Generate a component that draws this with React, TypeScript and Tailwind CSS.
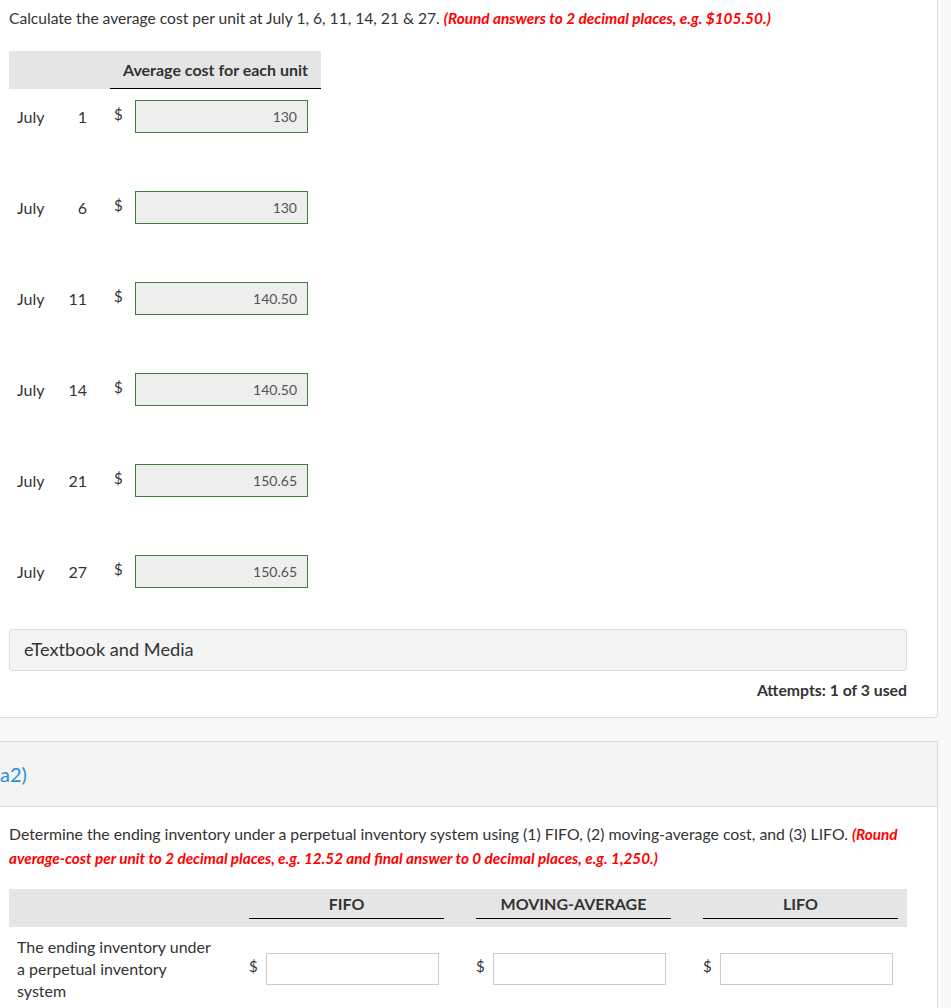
const rows = [
  { day: '1', value: '130' },
  { day: '6', value: '130' },
  { day: '11', value: '140.50' },
  { day: '14', value: '140.50' },
  { day: '21', value: '150.65' },
  { day: '27', value: '150.65' },
]

const methods = [
  { name: 'FIFO', w: 'w-[227px]' },
  { name: 'MOVING-AVERAGE', w: 'w-[227px]' },
  { name: 'LIFO', w: 'w-[213px]' },
]

function Dollar() {
  return <span className="w-[17px] shrink-0 pb-[5px] text-[15px] text-[#333]">$</span>
}

export default function App() {
  return (
    <div className="flex min-h-screen bg-[#f8f8f8] font-['Lato',_'Liberation_Sans',_sans-serif] text-[#333]">
      <div className="w-[938px] shrink-0">
        {/* part a1 */}
        <div className="rounded-br-[4px] border-r border-b border-[#dcdcdc] bg-white pb-[16px]">
          <p className="pl-[9px] pt-[8px] text-[15.6px] leading-[20px]">
            Calculate the average cost per unit at July 1, 6, 11, 14, 21 &amp; 27.{' '}
            <span className="text-[15.4px] font-bold italic text-[#ff0000]">
              (Round answers to 2 decimal places, e.g. $105.50.)
            </span>
          </p>

          <div className="ml-[9px] mt-[23px] w-[312px]">
            <div className="flex h-[38px] bg-[#e5e5e5]">
              <div className="w-[101px] shrink-0" />
              <div className="flex flex-1 items-center justify-center border-b border-black text-[16px] font-bold">
                Average cost for each unit
              </div>
            </div>
            {rows.map((r, i) => (
              <div
                key={r.day}
                className={`flex h-[33px] items-center ${i === 0 ? 'mt-[11px]' : 'mt-[58px]'}`}
              >
                <div className="flex w-[101px] shrink-0 justify-between pl-[8px] pr-[23px] text-[16px]">
                  <span>July</span>
                  <span>{r.day}</span>
                </div>
                <div className="flex w-[25px] shrink-0 justify-center">
                  <Dollar />
                </div>
                <div className="flex h-[33px] w-[173px] shrink-0 items-center justify-end border border-[#3f7b3f] bg-[#eeeeee] pr-[10px] text-[14px] text-[#555]">
                  {r.value}
                </div>
              </div>
            ))}
          </div>

          <div className="ml-[9px] mt-[41px] flex h-[42px] w-[898px] items-center rounded-[3px] border border-[#dddddd] bg-[#f4f4f4] pl-[14px] text-[18.2px]">
            eTextbook and Media
          </div>
          <div className="mt-[8px] w-[907px] text-right text-[15.8px] font-bold leading-[22px]">
            Attempts: 1 of 3 used
          </div>
        </div>

        {/* part a2 */}
        <div className="mt-[23px] border-t border-r border-[#dcdcdc] bg-white">
          <div className="flex h-[65px] items-center border-b border-[#dcdcdc] bg-[#f4f4f4] text-[20px] text-[#2a8ee0]">
            a2)
          </div>
          <p className="pl-[9px] pr-[20px] pt-[15px] text-[15.8px] leading-[24px]">
            Determine the ending inventory under a perpetual inventory system using (1) FIFO, (2)
            moving-average cost, and (3) LIFO.{' '}
            <span className="text-[15.3px] font-bold italic text-[#ff0000]">
              (Round average-cost per unit to 2 decimal places, e.g. 12.52 and final answer to 0
              decimal places, e.g. 1,250.)
            </span>
          </p>

          <div className="ml-[9px] mt-[19px] w-[898px]">
            <div className="flex h-[38px] bg-[#e5e5e5]">
              <div className="w-[231px] shrink-0" />
              {methods.map((m) => (
                <div key={m.name} className="w-[227px] shrink-0 pb-[8px] pl-[9px] pr-[23px]">
                  <div className="flex h-full items-center justify-center border-b border-black text-[16px] font-bold">
                    {m.name}
                  </div>
                </div>
              ))}
            </div>
            <div className="mt-[9px] flex items-center pb-[10px]">
              <div className="w-[231px] shrink-0 pl-[8px] text-[16px] leading-[22px]">
                The ending inventory under
                <br />
                a perpetual inventory
                <br />
                system
              </div>
              {methods.map((m) => (
                <div key={m.name} className={`flex ${m.w} shrink-0 items-center pl-[9px]`}>
                  <Dollar />
                  <div className="h-[32px] w-[173px] shrink-0 border border-[#cccccc] bg-white" />
                </div>
              ))}
            </div>
          </div>
        </div>
      </div>
      <div className="flex-1" />
    </div>
  )
}
